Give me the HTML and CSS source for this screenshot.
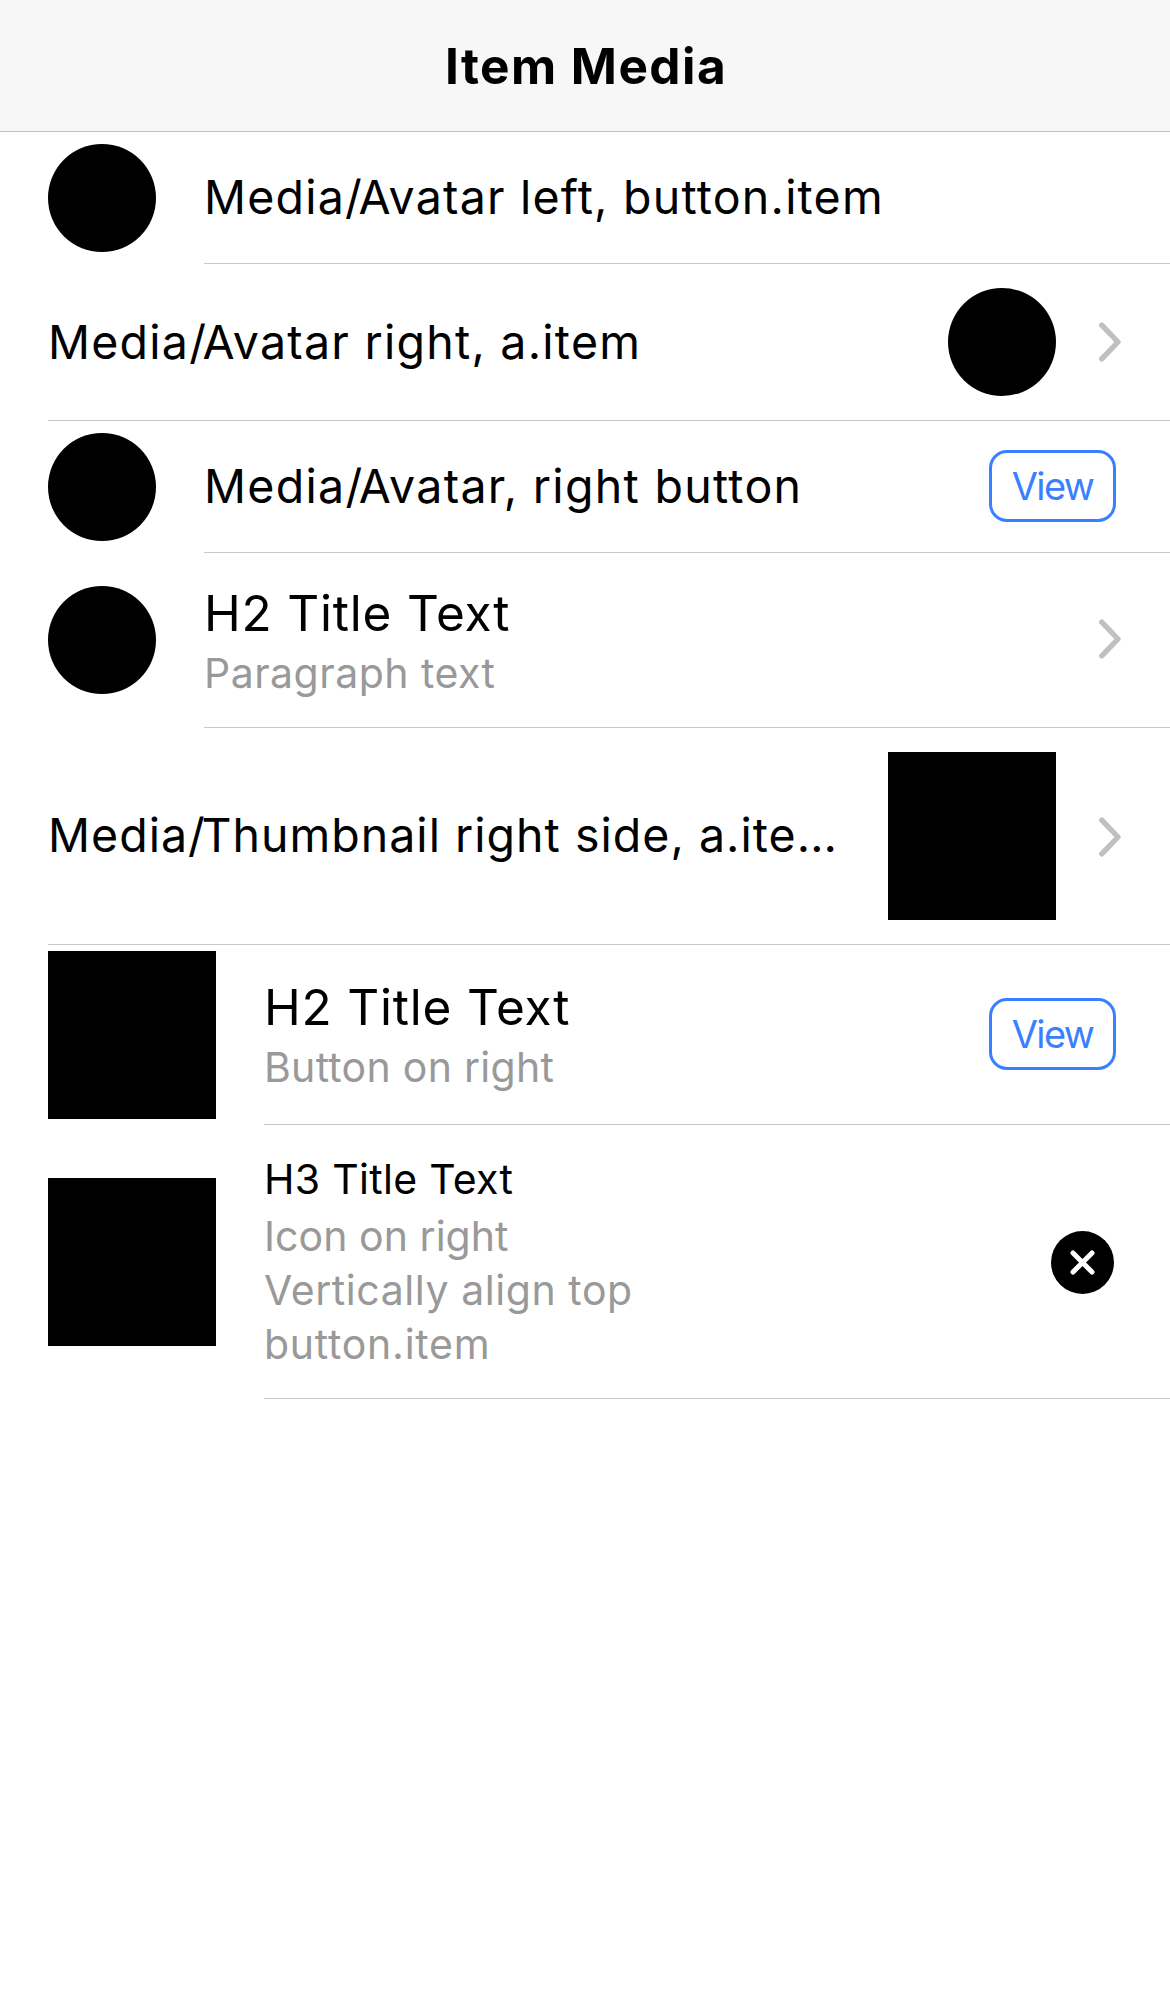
FILE: index.html
```
<!DOCTYPE html>
<html lang="en">
<head>
<meta charset="utf-8">
<title>Item Media</title>
<link rel="stylesheet" href="styles.css">
</head>
<body>
<header class="toolbar"><h1 class="toolbar-title">Item Media</h1></header>
<main class="list">
  <div class="item item-button">
    <div class="avatar"></div>
    <div class="item-inner"><div class="label">Media<span class="slash">/</span>Avatar left, button.item</div></div>
  </div>
  <div class="item item-link">
    <div class="item-inner">
      <div class="label label-link">Media<span class="slash">/</span>Avatar right, a.item</div>
      <div class="avatar"></div>
      <svg class="chevron" viewBox="0 0 22 40"><path d="M2.8 3.2 19 20 2.8 36.8"/></svg>
    </div>
  </div>
  <div class="item item-button">
    <div class="avatar"></div>
    <div class="item-inner">
      <div class="label label-button">Media<span class="slash">/</span>Avatar, right button</div>
      <button class="view">View</button>
    </div>
  </div>
  <div class="item item-text">
    <div class="avatar"></div>
    <div class="item-inner">
      <div class="label text"><h2>H2 Title Text</h2><p class="paragraph">Paragraph text</p></div>
      <svg class="chevron" viewBox="0 0 22 40"><path d="M2.8 3.2 19 20 2.8 36.8"/></svg>
    </div>
  </div>
  <div class="item item-thumb-link">
    <div class="item-inner">
      <div class="label label-long">Media<span class="slash">/</span>Thumbnail right side, a.ite…</div>
      <div class="thumbnail"></div>
      <svg class="chevron" viewBox="0 0 22 40"><path d="M2.8 3.2 19 20 2.8 36.8"/></svg>
    </div>
  </div>
  <div class="item item-thumb">
    <div class="thumbnail"></div>
    <div class="item-inner">
      <div class="label text"><h2>H2 Title Text</h2><p>Button on right</p></div>
      <button class="view">View</button>
    </div>
  </div>
  <div class="item item-tall">
    <div class="thumbnail"></div>
    <div class="item-inner">
      <div class="label"><h3>H3 Title Text</h3><p class="icon-note">Icon on right</p><p class="align-note">Vertically align top</p><p class="type-note">button.item</p></div>
      <svg class="close" viewBox="0 0 63 63"><circle cx="31.5" cy="31.5" r="31.5"/><path d="M22 22 41 41M41 22 22 41"/></svg>
    </div>
  </div>
</main>
</body>
</html>
```
FILE: styles.css
```
* { box-sizing: border-box; }
body {
  margin: 0;
  background: #fff;
  color: #000;
  font-family: Inter, "Liberation Sans", sans-serif;
  font-size: 46.5px;
  font-kerning: normal;
}
h1, h2, h3, p { margin: 0; font-weight: 400; }
.toolbar {
  height: 132px;
  display: flex;
  justify-content: center;
  background: #f7f7f7;
  border-bottom: 1px solid #c1c1c2;
}
.toolbar-title {
  padding-left: 2px;
  font-size: 49.5px;
  line-height: 132px;
  font-weight: 700;
  letter-spacing: 1.46px;
}
.item {
  display: flex;
  align-items: center;
  gap: 48px;
  padding-left: 48px;
}
.item-button { height: 132px; }
.item-link { height: 157px; }
.item-text { height: 175px; }
.item-thumb-link { height: 217px; }
.item-thumb { height: 180px; }
.item-tall { height: 274px; }
.item-inner {
  flex: 1;
  min-width: 0;
  align-self: stretch;
  display: flex;
  align-items: center;
  border-bottom: 1px solid #c8c7cc;
}
.label {
  flex: 1;
  min-width: 0;
  line-height: 60px;
  letter-spacing: 1.22px;
  white-space: nowrap;
}
.slash { letter-spacing: -3.4px; }
.label-link { letter-spacing: 1.25px; }
.label-button { letter-spacing: 1.3px; }
.label-long {
  margin-bottom: 2px;
  letter-spacing: 1.02px;
}
.item-button .label, .item-thumb .label { margin-bottom: 1px; }
.avatar {
  flex: none;
  width: 108px;
  height: 108px;
  border-radius: 50%;
  background: #000;
}
.item-text .avatar { margin-bottom: 1px; }
.thumbnail {
  flex: none;
  width: 168px;
  height: 168px;
  background: #000;
}
.text { padding-top: 3px; }
h2 {
  margin-bottom: 3px;
  font-size: 49.5px;
  line-height: 60px;
  letter-spacing: 0.8px;
}
h3 {
  margin-bottom: 3px;
  font-size: 41px;
  line-height: 54px;
  letter-spacing: 0.3px;
}
p {
  font-size: 41px;
  line-height: 54px;
  letter-spacing: 0.28px;
  color: #999;
}
.paragraph { letter-spacing: 0.48px; }
.icon-note { letter-spacing: 0.05px; }
.align-note { letter-spacing: 0.56px; }
.type-note { letter-spacing: 0.75px; }
.view {
  flex: none;
  width: 127px;
  height: 72px;
  margin: 0 54px 1px 0;
  padding: 0;
  border: 3px solid #3880ff;
  border-radius: 18px;
  background: none;
  color: #3880ff;
  font-family: inherit;
  font-size: 38px;
  line-height: 66px;
  letter-spacing: -1.6px;
}
.chevron {
  flex: none;
  width: 22px;
  height: 40px;
  margin: 0 49px 0 43px;
  fill: none;
  stroke: #c0c0c0;
  stroke-width: 5.4;
  stroke-linecap: round;
  stroke-linejoin: round;
}
.item-text .chevron { margin-bottom: 2px; }
.item-thumb-link .chevron { margin-top: 2px; }
.close {
  flex: none;
  width: 63px;
  height: 63px;
  margin: 2px 56px 0 0;
}
.close path {
  stroke: #fff;
  stroke-width: 5;
  stroke-linecap: round;
}
```
